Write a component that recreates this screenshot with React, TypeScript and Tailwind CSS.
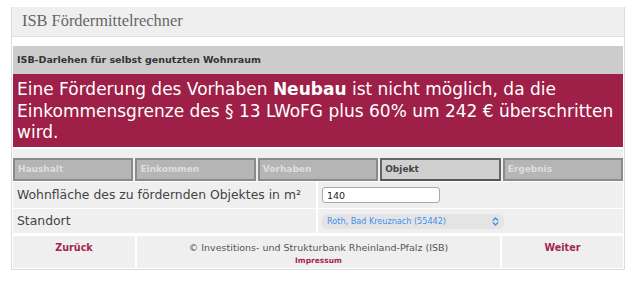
import React from 'react';

const tabs = [
  { label: 'Haushalt', active: false },
  { label: 'Einkommen', active: false },
  { label: 'Vorhaben', active: false },
  { label: 'Objekt', active: true },
  { label: 'Ergebnis', active: false },
];

const verdana = "font-['DejaVu_Sans',Verdana,sans-serif]";

export default function App() {
  return (
    <div className="w-[642px] h-[289px] bg-white pt-[7px] pl-[11px]">
      {/* Outer frame */}
      <div className={`w-[614px] border border-[#dcdcdc] border-t-0 ${verdana}`}>
        {/* Title */}
        <div className="h-[30px] bg-[#efefef] border-b border-[#dddddd] flex items-center pl-[10px]">
          <span className="font-['Liberation_Serif',Georgia,serif] text-[16.4px] text-[#666666]">ISB Fördermittelrechner</span>
        </div>

        <div className="h-[9px] bg-white" />

        {/* Section header */}
        <div className="mx-[1px] h-[28px] bg-[#cccccc] flex items-center pl-[4px]">
          <span className="text-[9.5px] font-bold text-[#333333]">ISB-Darlehen für selbst genutzten Wohnraum</span>
        </div>

        {/* Error message */}
        <div className="mx-[1px] h-[73px] bg-[#9e1f47] px-[4px] pt-[5px] text-[17px] leading-[21.5px] text-white">
          Eine Förderung des Vorhaben <b>Neubau</b> ist nicht möglich, da die Einkommensgrenze des § 13 LWoFG plus 60% um 242 € überschritten wird.
        </div>

        <div className="h-[2px] bg-white" />

        {/* Tabs */}
        <div className="mx-[1px] bg-[#efefef] pt-[9px] flex gap-[2px]">
          {tabs.map((t) => (
            <div
              key={t.label}
              className={
                t.active
                  ? 'flex-1 h-[23px] border-2 border-[#666666] border-b-[#555555] bg-[#d0d0d0] flex items-center pl-[3px] text-[9px] font-bold text-[#444444]'
                  : 'flex-1 h-[23px] border-2 border-[#8a8a8a] bg-[#b5b5b5] flex items-center pl-[3px] text-[9px] font-bold text-[#dedede]'
              }
            >
              {t.label}
            </div>
          ))}
        </div>

        <div className="h-[1px] bg-white" />

        {/* Form rows */}
        <div className="mx-[1px] flex gap-[2px] h-[26px]">
          <div className="w-[303px] bg-[#efefef] flex items-center pl-[4px] text-[12.4px] text-[#444444] whitespace-nowrap">
            Wohnfläche des zu fördernden Objektes in m²
          </div>
          <div className="flex-1 bg-[#efefef] flex items-center pl-[4px]">
            <input
              readOnly
              value="140"
              className="w-[118px] h-[16px] rounded-[3px] border border-[#a9a9a9] bg-white px-[4px] text-[9.5px] text-[#222222] outline-none"
            />
          </div>
        </div>

        <div className="h-[1px] bg-white" />

        <div className="mx-[1px] flex gap-[2px] h-[24px]">
          <div className="w-[303px] bg-[#efefef] flex items-center pl-[4px] text-[12.4px] text-[#444444]">Standort</div>
          <div className="flex-1 bg-[#efefef] flex items-center pl-[4px]">
            <div className="w-[182px] h-[15px] rounded-[6px] bg-[#e4e4e4] flex items-center justify-between px-[5px] text-[8.1px] text-[#3d8ff2]">
              <span>Roth, Bad Kreuznach (55442)</span>
              <svg width="7" height="9" viewBox="0 0 7 9" fill="none" stroke="#3d8ff2" strokeWidth="1.4" strokeLinecap="round" strokeLinejoin="round">
                <path d="M1.2 3.2 L3.5 1 L5.8 3.2" />
                <path d="M1.2 5.8 L3.5 8 L5.8 5.8" />
              </svg>
            </div>
          </div>
        </div>

        <div className="h-[3px] bg-white" />

        {/* Footer */}
        <div className="mx-[1px] flex gap-[2px] h-[32px]">
          <div className="w-[122px] bg-[#efefef] flex justify-center pt-[5px] text-[9.6px] font-bold text-[#a3274f]">Zurück</div>
          <div className="flex-1 bg-[#efefef] flex flex-col items-center pt-[5px]">
            <span className="text-[9.5px] text-[#555555] leading-[13px]">© Investitions- und Strukturbank Rheinland-Pfalz (ISB)</span>
            <span className="text-[7.5px] font-bold text-[#a3274f] leading-[10px] mt-[2px]">Impressum</span>
          </div>
          <div className="w-[121px] bg-[#efefef] flex justify-center pt-[5px] text-[9.6px] font-bold text-[#a3274f]">Weiter</div>
        </div>
        <div className="h-[1px] bg-white" />
      </div>
    </div>
  );
}
